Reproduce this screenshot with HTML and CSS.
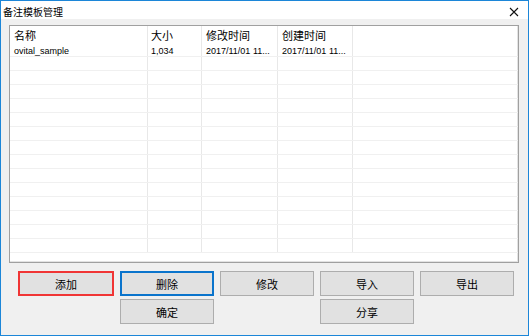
FILE: index.html
```html
<!DOCTYPE html>
<html>
<head>
<meta charset="utf-8">
<link rel="stylesheet" href="styles.css">
</head>
<body>
<div class="window">
  <div class="titlebar">
    <span class="title">备注模板管理</span>
    <svg class="close" width="10" height="10" viewBox="0 0 10 10"><path d="M1 1L9 9M9 1L1 9" stroke="#111" stroke-width="1.1" fill="none"/></svg>
  </div>
  <div class="content">
    <div class="list">
      <div class="row head">
        <div class="c c1">名称</div><div class="c c2">大小</div><div class="c c3">修改时间</div><div class="c c4">创建时间</div><div class="c c5"></div>
      </div>
      <div class="row data">
        <div class="c c1">ovital_sample</div><div class="c c2">1,034</div><div class="c c3">2017/11/01 11...</div><div class="c c4">2017/11/01 11...</div><div class="c c5"></div>
      </div>
      <div class="row"><div class="c c1"></div><div class="c c2"></div><div class="c c3"></div><div class="c c4"></div><div class="c c5"></div></div>
      <div class="row"><div class="c c1"></div><div class="c c2"></div><div class="c c3"></div><div class="c c4"></div><div class="c c5"></div></div>
      <div class="row"><div class="c c1"></div><div class="c c2"></div><div class="c c3"></div><div class="c c4"></div><div class="c c5"></div></div>
      <div class="row"><div class="c c1"></div><div class="c c2"></div><div class="c c3"></div><div class="c c4"></div><div class="c c5"></div></div>
      <div class="row"><div class="c c1"></div><div class="c c2"></div><div class="c c3"></div><div class="c c4"></div><div class="c c5"></div></div>
      <div class="row"><div class="c c1"></div><div class="c c2"></div><div class="c c3"></div><div class="c c4"></div><div class="c c5"></div></div>
      <div class="row"><div class="c c1"></div><div class="c c2"></div><div class="c c3"></div><div class="c c4"></div><div class="c c5"></div></div>
      <div class="row"><div class="c c1"></div><div class="c c2"></div><div class="c c3"></div><div class="c c4"></div><div class="c c5"></div></div>
      <div class="row"><div class="c c1"></div><div class="c c2"></div><div class="c c3"></div><div class="c c4"></div><div class="c c5"></div></div>
      <div class="row"><div class="c c1"></div><div class="c c2"></div><div class="c c3"></div><div class="c c4"></div><div class="c c5"></div></div>
      <div class="row"><div class="c c1"></div><div class="c c2"></div><div class="c c3"></div><div class="c c4"></div><div class="c c5"></div></div>
      <div class="row"><div class="c c1"></div><div class="c c2"></div><div class="c c3"></div><div class="c c4"></div><div class="c c5"></div></div>
      <div class="row"><div class="c c1"></div><div class="c c2"></div><div class="c c3"></div><div class="c c4"></div><div class="c c5"></div></div>
      <div class="row"><div class="c c1"></div><div class="c c2"></div><div class="c c3"></div><div class="c c4"></div><div class="c c5"></div></div>
    </div>
    <div class="buttons">
      <button class="btn add">添加</button>
      <button class="btn del">删除</button>
      <button class="btn">修改</button>
      <button class="btn">导入</button>
      <button class="btn">导出</button>
      <button class="btn ok">确定</button>
      <button class="btn share">分享</button>
    </div>
  </div>
</div>
</body>
</html>
```
FILE: styles.css
```css
* { box-sizing: border-box; }
html, body { margin: 0; padding: 0; }
body { width: 529px; height: 336px; overflow: hidden; background: #f0f0f0; }
.window {
  width: 529px; height: 336px;
  border: 1px solid #1c86d8;
  background: #f0f0f0;
  display: flex; flex-direction: column;
  font-family: "Noto Sans CJK SC", sans-serif;
  color: #000;
}
.titlebar {
  height: 18px; background: #fff;
  display: flex; align-items: center; justify-content: space-between;
  padding: 0 9px 0 2px;
}
.title { font-size: 10px; line-height: 18px; padding-top: 3px; }
.close { margin-top: 3px; }
.content { padding: 6px 8px 0 8px; }
.list {
  width: 510px; height: 238px;
  background: #fff;
  border: 1px solid #a0a0a0;
  box-shadow: inset -1px -1px 0 #e3e3e3;
  overflow: hidden;
}
.row { display: flex; height: 14px; border-bottom: 1px solid #f0f0f0; }
.row.head { height: 17px; border-bottom: none; }
.c { border-right: 1px solid #e8e8e8; height: 100%; padding-left: 4px; white-space: nowrap; overflow: hidden; }
.c1 { width: 138px; }
.c2 { width: 54px; padding-left: 3px; }
.c3 { width: 76px; }
.c4 { width: 75px; }
.c5 { flex: 1; border-right: none; }
.head .c { font-size: 11px; line-height: 17px; padding-top: 1px; }
.data .c { font-family: "Liberation Sans", Arial, sans-serif; font-size: 9px; line-height: 14px; padding-top: 1px; }
.buttons {
  display: grid;
  grid-template-columns: repeat(5, 94px);
  column-gap: 6px; row-gap: 3px;
  padding-left: 11px;
  margin-top: 8px;
}
.btn {
  height: 25px;
  background: #e1e1e1;
  border: 1px solid #adadad;
  font-family: "Noto Sans CJK SC", sans-serif;
  font-size: 11px; color: #000;
  padding: 0;
}
.btn.add { border: 2px solid #f03535; margin-left: -2px; width: 96px; }
.btn.del { border: 2px solid #0a74cc; }
.btn.ok { grid-column: 2; }
.btn.share { grid-column: 4; }
```
